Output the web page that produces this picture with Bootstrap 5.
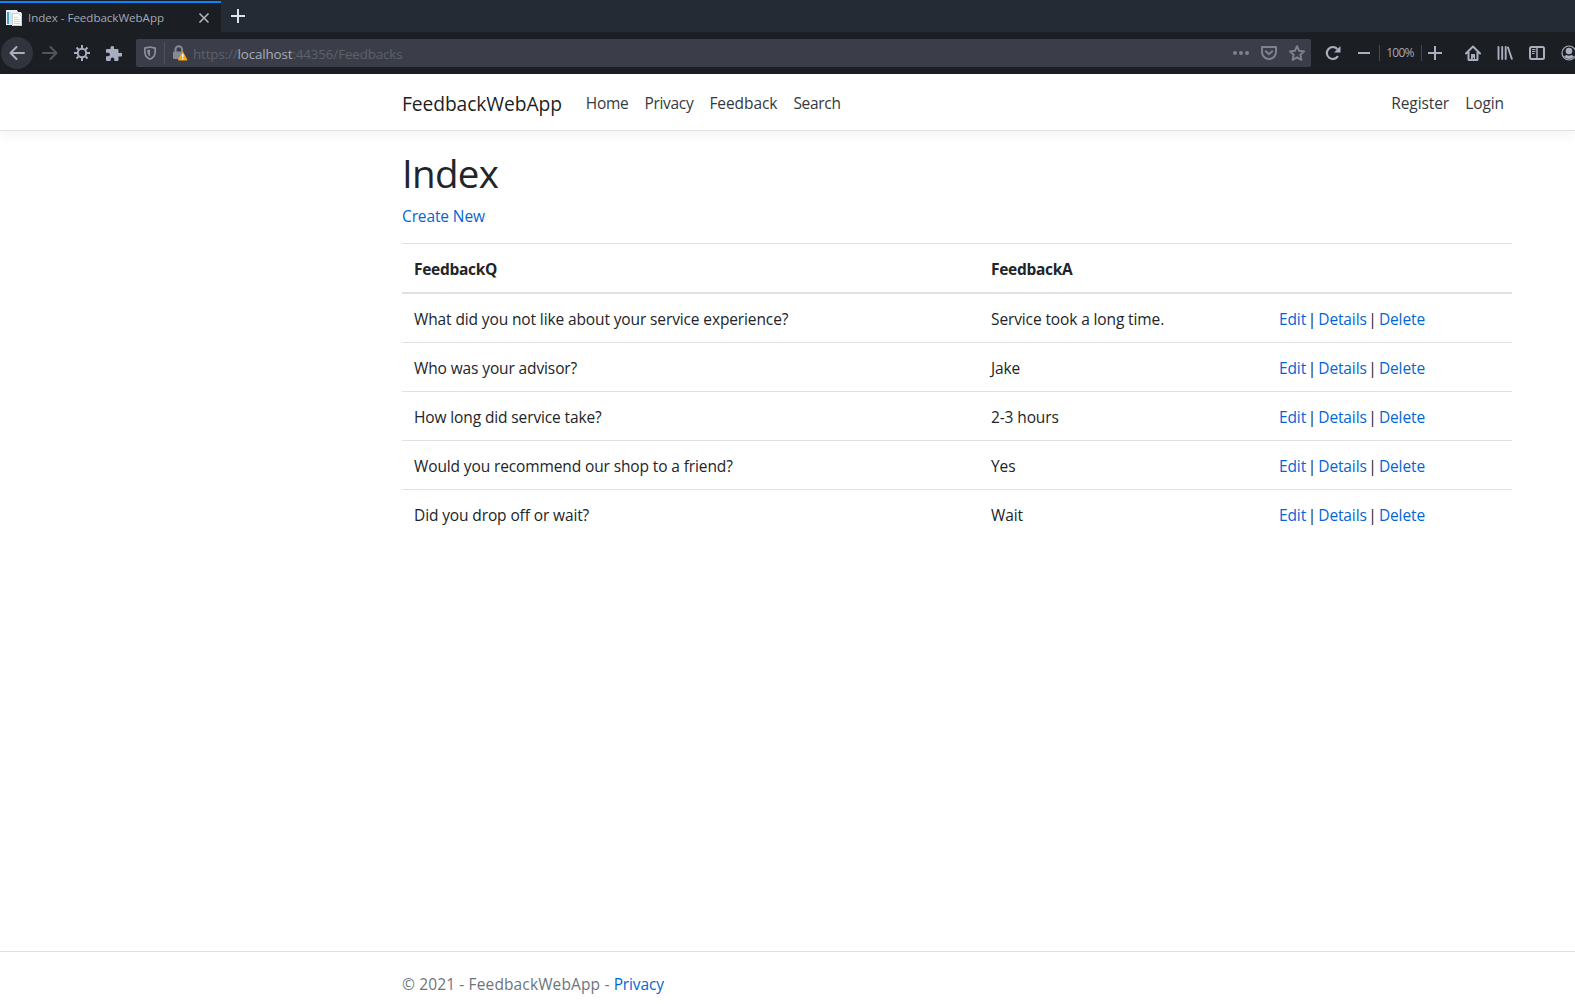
<!DOCTYPE html>
<html lang="en">
<head>
<meta charset="utf-8">
<meta name="viewport" content="width=device-width, initial-scale=1">
<title>Index - FeedbackWebApp</title>
<link rel="stylesheet" href="https://cdn.jsdelivr.net/npm/bootstrap@5.3.0/dist/css/bootstrap.min.css">
<style>
html,body{height:100%;overflow:hidden}
body{font-family:"Open Sans","Noto Sans",sans-serif;font-size:15.5px;line-height:24px;letter-spacing:-.12px;color:#212529}
a{color:#0366d6;text-decoration:none}
svg{display:block;flex:none}
/* browser window */
.chrome{height:74px;background:#1b1e22;color:#a3a9ba;flex:none}
.tabstrip{height:32px;background:#242b35}
.tab-active{width:221px;height:32px;background:#1b1e22;padding:3px 11px 0 6px;font-size:11.6px;letter-spacing:-.04px;box-shadow:inset 0 1px #1b1e22,inset 0 3px #0a84ff}
.tab-active .tab-title{color:#a3a8b8;margin-left:6px}
.newtab{width:34px;color:#dfe2e8}
.toolbar{height:42px;padding-left:1px}
.slot{width:32px;height:32px;display:flex;align-items:center;justify-content:center;flex:none}
.back{background:#31343c;margin-right:1px}
.slot-reload{margin-left:6px}
.slot-minus{width:30px}
.slot-plus{width:26px;margin-right:9px}
.slot-account{width:22px;justify-content:flex-start;padding-left:8px}
.urlbar{width:1175px;height:28px;background:#3b3e48;border-radius:2px;color:#7a7e8d;margin-left:6px;padding-right:6px;flex:none}
.shield-box{width:29px;height:22px;border-right:1px solid #4e515d}
.addr{font-size:13.4px;letter-spacing:-.14px;color:#5d616c;margin-left:5px;padding-top:2px}
.addr b{font-weight:400;color:#a5abba}
.page-actions{gap:12px}
.zoombox{width:43px;height:16px;border:solid #44474e;border-width:0 1px;font-size:12px;letter-spacing:-.75px;line-height:16px;padding-right:1px}
/* page */
.page-wrap{width:1140px;margin-left:387px;padding:0 15px}
.site-nav{padding:8px 0;border-bottom:1px solid #dee2e6;box-shadow:0 .25rem .75rem rgba(0,0,0,.05);margin-bottom:16px}
.site-nav .page-wrap{flex:none}
.site-nav .navbar-brand{font-size:19.3px;line-height:30px;padding:7px 0 3px;margin-right:16px;color:rgba(0,0,0,.9)}
.site-nav .nav-link{padding:9px 8px 7px;color:#343a40;letter-spacing:-.3px}
.site-nav .nav-wide{letter-spacing:-.08px}
h1{font-size:38.5px;line-height:48px;font-weight:400;letter-spacing:-.7px;padding-top:2px;margin-bottom:6px}
.create-line{padding-top:1px;margin-bottom:15px}
.feedback-table{width:1110px;margin-bottom:16px;table-layout:fixed;border-collapse:separate;border-spacing:0;--bs-table-bg:transparent;--bs-table-color:#212529}
.feedback-table th,.feedback-table td{padding:13px 12px 11px;line-height:24px;border:0 solid #dee2e6}
.feedback-table th{border-width:1px 0 2px;font-weight:700;letter-spacing:-.3px}
.feedback-table tbody tr:not(:last-child) td{border-bottom-width:1px}
.feedback-table td:last-child{padding-left:13px}
.col-question{width:577px}
.col-answer{width:287px}
.pipe{display:inline-block;width:12.2px;text-align:center;text-indent:-.5px}
.site-footer{border-top:1px solid #dee2e6;height:54px;line-height:60px;color:#6c757d;padding-top:2px;flex:none}
.copy-text{letter-spacing:.13px;white-space:pre}
</style>
</head>
<body class="d-flex flex-column bg-white">
<div class="chrome">
  <div class="tabstrip d-flex">
    <div class="tab-active d-flex align-items-center">
      <svg width="16" height="16" viewBox="0 0 16 16"><path fill="#eef3f5" d="M0 0h11l1 2h3l1 2v12H6v-1H0z"/><path fill="#4a9fd0" d="M1 2h2v12H1z"/><path fill="#d0e4ee" d="M3 2h3v12H3z"/><path fill="#fafbfb" stroke="#c9d0d3" d="M6.500 15.500V3.500h6l3 3v9z"/><path stroke="#cdd5d9" d="M8 7.500h4M8 9.500h6M8 11.500h6M8 13.500h6"/></svg>
      <span class="tab-title flex-grow-1">Index - FeedbackWebApp</span>
      <svg width="12" height="12" viewBox="0 0 12 12" fill="none" stroke="#b0b4c2" stroke-width="1.600"><path d="M1.500 1.500l9 9M10.500 1.500l-9 9"/></svg>
    </div>
    <div class="newtab d-flex align-items-center justify-content-center"><svg width="14" height="14" viewBox="0 0 14 14" fill="none" stroke="currentColor" stroke-width="2"><path d="M7 0v14M0 7h14"/></svg></div>
  </div>
  <div class="toolbar d-flex align-items-center">
    <div class="slot back rounded-circle"><svg width="16" height="16" viewBox="0 0 16 16" fill="none" stroke="#a9aec0" stroke-width="2" stroke-linecap="round" stroke-linejoin="round"><path d="M15 8H1.500M7.500 2l-6 6 6 6"/></svg></div>
    <div class="slot"><svg width="16" height="16" viewBox="0 0 16 16" fill="none" stroke="#53565e" stroke-width="2" stroke-linecap="round" stroke-linejoin="round"><path d="M1 8h13.500M8.500 2l6 6-6 6"/></svg></div>
    <div class="slot"><svg width="16" height="16" viewBox="0 0 16 16" fill="none" stroke="#a9aec0" stroke-width="2"><circle cx="8" cy="8" r="4.200"/><path d="M8 0v3M8 13v3M0 8h3M13 8h3M2.500 2.500l2 2M11.500 11.500l2 2M13.500 2.500l-2 2M4.500 11.500l-2 2"/></svg></div>
    <div class="slot"><svg width="16" height="16" viewBox="0 0 16 16" fill="#a9aec0"><path d="M0 5q0-1 1-1h3.500V2.200a1.900 1.900 0 0 1 3.600 0V4H11.500q1 0 1 1v3h1.300a1.600 1.600 0 0 1 1.700 3.600h-3V15q0 1-1 1H8.300v-1.800a1.600 1.600 0 0 0-3.600 0V16H1q-1 0-1-1v-3.700h2.200a1.600 1.600 0 0 0 0-3.500H0z"/></svg></div>
    <div class="urlbar d-flex align-items-center">
      <div class="shield-box d-flex align-items-center justify-content-center"><svg width="14" height="14" viewBox="0 0 14 14"><path fill="none" stroke="#8b8f9f" stroke-width="1.700" stroke-linejoin="round" d="M7 1L1.800 2.200V5.500C1.800 9.500 4 12 7 13.200 10 12 12.200 9.500 12.200 5.500V2.200z"/><path fill="#8b8f9f" d="M7 3.500v7C5.200 9.300 4.300 7.800 4.300 5.600V4z"/></svg></div>
      <svg class="ms-2" width="15" height="16" viewBox="0 0 15 16"><path fill="none" stroke="#858998" stroke-width="2" d="M2.500 8V4.500a3.300 3.300 0 0 1 6.600 0V7"/><path fill="#858998" d="M1 6.500h8.500L7 14H1q-1 0-1-1V7.500q0-1 1-1z"/><path fill="#ffa70f" stroke="#ffa70f" stroke-linejoin="round" stroke-width="1.500" d="M9.700 7.500l3.900 7.300H5.800z"/><path stroke="#fff" stroke-width="1.400" d="M9.700 9v3.200M9.700 13.200v1.300"/></svg>
      <div class="addr flex-grow-1">https://<b>localhost</b>:44356/Feedbacks</div>
      <div class="page-actions d-flex">
        <svg width="16" height="16" viewBox="0 0 16 16" fill="#7e8290"><circle cx="2" cy="8" r="2"/><circle cx="8" cy="8" r="2"/><circle cx="14" cy="8" r="2"/></svg>
        <svg width="16" height="16" viewBox="0 0 16 16" fill="none" stroke="#7e8290" stroke-width="2" stroke-linejoin="round" stroke-linecap="round"><path d="M1 2h14v5a7 7 0 0 1-14 0z"/><path d="M4.800 6.300L8 9.300l3.200-3"/></svg>
        <svg width="16" height="16" viewBox="0 0 16 16" fill="none" stroke="#7e8290" stroke-width="1.900" stroke-linejoin="round"><path d="M8 1.200l2.100 4.600 5 .6-3.700 3.400 1 5L8 12.300l-4.400 2.500 1-5L.9 6.400l5-.6z"/></svg>
      </div>
    </div>
    <div class="slot slot-reload"><svg width="16" height="16" viewBox="0 0 16 16"><path fill="none" stroke="#a9aec0" stroke-width="2.200" d="M12.900 11.200A6 6 0 1 1 12.300 4"/><path fill="#a9aec0" d="M15.500 1v6.500H9z"/></svg></div>
    <div class="slot slot-minus"><svg width="12" height="2"><path fill="#a9aec0" d="M0 0h12v2H0z"/></svg></div>
    <div class="zoombox text-center">100%</div>
    <div class="slot slot-plus"><svg width="14" height="14" viewBox="0 0 14 14" stroke="#a9aec0" stroke-width="2"><path d="M7 0v14M0 7h14"/></svg></div>
    <div class="slot"><svg width="16" height="16" viewBox="0 0 16 16"><path fill="none" stroke="#a9aec0" stroke-width="2" stroke-linecap="round" stroke-linejoin="round" d="M1 8.500L8 1.500l7 7M3.500 7v7.500q0 .5.500.5h8q.500 0 .500-.5V7"/><path fill="#a9aec0" d="M6 15V9.500Q6 9 6.500 9h3q.500 0 .500.500V15H8.800v-2.200H7.700V15z"/></svg></div>
    <div class="slot"><svg width="16" height="16" viewBox="0 0 16 16" fill="none" stroke="#a9aec0" stroke-linecap="round"><path d="M1.500 2v12M5.200 2v12M8.700 2v12M11 2.500l3.800 11.300" stroke-width="1.900"/></svg></div>
    <div class="slot"><svg width="16" height="16" viewBox="0 0 16 16" fill="none" stroke="#a9aec0"><rect x="1" y="2" width="14" height="12" rx="1.500" stroke-width="2"/><path stroke-width="1.500" d="M8 2v12"/><path d="M3 4.500h3.500M3 6.500h3.500M3 8.500h2.500"/></svg></div>
    <div class="slot slot-account overflow-hidden"><svg width="16" height="16" viewBox="0 0 16 16"><circle cx="8" cy="8" r="7" fill="none" stroke="#a9aec0" stroke-width="1.200"/><circle cx="8" cy="6" r="3.300" fill="#a9aec0"/><path fill="#a9aec0" d="M3 11.500q1.500-1.500 2.500-1.500 2.500 1.500 5 0 1 0 2.500 1.500Q11 14 8 14T3 11.500z"/></svg></div>
  </div>
</div>
<header>
  <nav class="navbar navbar-expand site-nav">
    <div class="page-wrap d-flex align-items-center">
      <a class="navbar-brand" href="#">FeedbackWebApp</a>
      <ul class="navbar-nav flex-grow-1">
        <li class="nav-item"><a class="nav-link" href="#">Home</a></li>
        <li class="nav-item"><a class="nav-link" href="#">Privacy</a></li>
        <li class="nav-item"><a class="nav-link nav-wide" href="#">Feedback</a></li>
        <li class="nav-item"><a class="nav-link" href="#">Search</a></li>
      </ul>
      <ul class="navbar-nav">
        <li class="nav-item"><a class="nav-link nav-wide" href="#">Register</a></li>
        <li class="nav-item"><a class="nav-link nav-wide" href="#">Login</a></li>
      </ul>
    </div>
  </nav>
</header>
<main class="page-wrap flex-grow-1">
  <h1>Index</h1>
  <p class="create-line"><a href="#">Create New</a></p>
  <table class="table feedback-table">
    <colgroup><col class="col-question"><col class="col-answer"><col></colgroup>
    <thead><tr><th>FeedbackQ</th><th>FeedbackA</th><th></th></tr></thead>
    <tbody>
      <tr><td>What did you not like about your service experience?</td><td>Service took a long time.</td><td><a href="#">Edit</a><span class="pipe">|</span><a href="#">Details</a><span class="pipe">|</span><a href="#">Delete</a></td></tr>
      <tr><td>Who was your advisor?</td><td>Jake</td><td><a href="#">Edit</a><span class="pipe">|</span><a href="#">Details</a><span class="pipe">|</span><a href="#">Delete</a></td></tr>
      <tr><td>How long did service take?</td><td>2-3 hours</td><td><a href="#">Edit</a><span class="pipe">|</span><a href="#">Details</a><span class="pipe">|</span><a href="#">Delete</a></td></tr>
      <tr><td>Would you recommend our shop to a friend?</td><td>Yes</td><td><a href="#">Edit</a><span class="pipe">|</span><a href="#">Details</a><span class="pipe">|</span><a href="#">Delete</a></td></tr>
      <tr><td>Did you drop off or wait?</td><td>Wait</td><td><a href="#">Edit</a><span class="pipe">|</span><a href="#">Details</a><span class="pipe">|</span><a href="#">Delete</a></td></tr>
    </tbody>
  </table>
</main>
<footer class="site-footer">
  <div class="page-wrap"><span class="copy-text">© 2021 - FeedbackWebApp - </span><a href="#">Privacy</a></div>
</footer>
<script src="https://cdn.jsdelivr.net/npm/bootstrap@5.3.0/dist/js/bootstrap.bundle.min.js"></script>
</body>
</html>
